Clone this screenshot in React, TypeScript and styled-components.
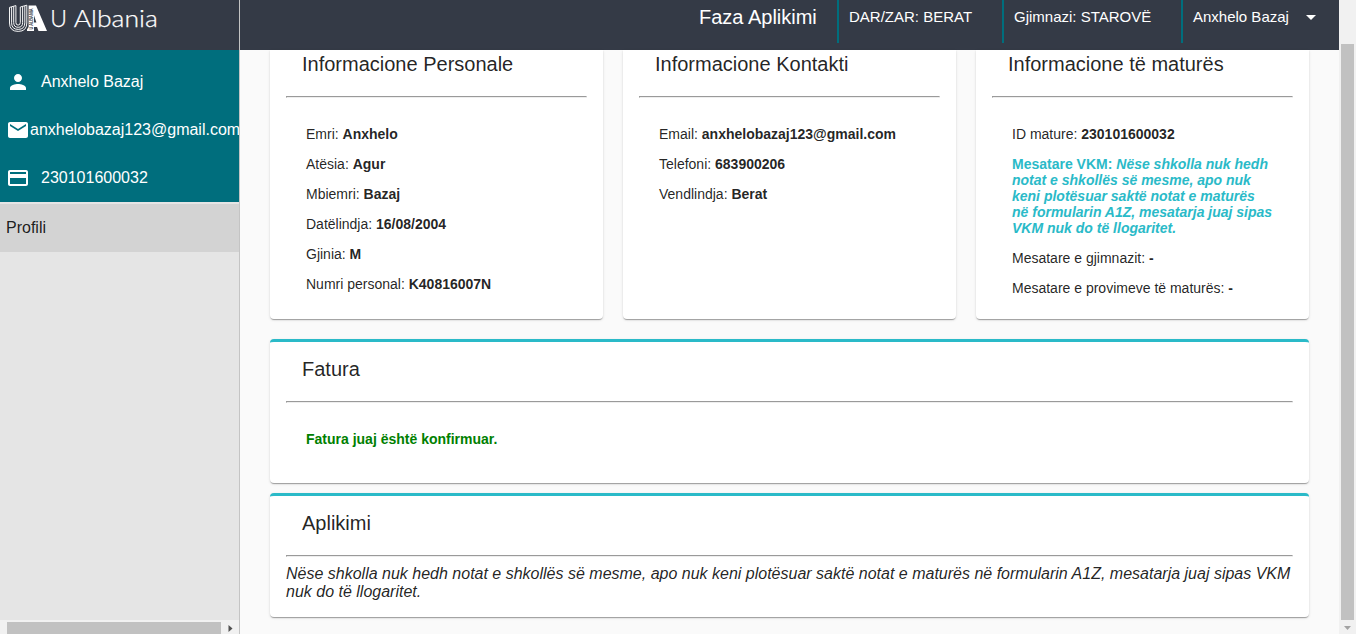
import React from "react";
import styled, { createGlobalStyle } from "styled-components";

const Global = createGlobalStyle`
  * { box-sizing: border-box; }
  body { margin: 0; overflow: hidden; background: #fafafa; }
  p, h2 { margin: 0; font-weight: 400; }
`;

const Shell = styled.div`
  display: flex;
  width: 1356px;
  height: 634px;
  overflow: hidden;
  font-family: "Liberation Sans", Arial, sans-serif;
  color: rgba(0, 0, 0, 0.87);
`;

const Sidebar = styled.aside`
  display: flex;
  flex-direction: column;
  width: 240px;
  flex: none;
  background: #e5e5e5;
  border-right: 1px solid #c4c4c4;
  overflow: hidden;
`;

const Brand = styled.div`
  height: 50px;
  flex: none;
  padding: 4px 0 0 8px;
  background: #343a46;
`;

const Account = styled.div`
  height: 152px;
  flex: none;
  padding-top: 8px;
  margin-bottom: 2px;
  background: #006e7d;
  color: #fff;
`;

const AccountRow = styled.div<{ $gap: number }>`
  display: flex;
  align-items: center;
  gap: ${(p) => p.$gap}px;
  height: 48px;
  padding-left: 6px;
  font-size: 16px;
  white-space: nowrap;

  svg { flex: none; fill: #fff; }
`;

const NavItem = styled.div`
  height: 48px;
  flex: none;
  padding: 0 6px;
  background: #d3d3d3;
  font-size: 16px;
  line-height: 47px;
`;

const HorizontalBar = styled.div`
  display: flex;
  align-items: flex-end;
  justify-content: space-between;
  height: 14px;
  margin-top: auto;
  padding: 0 6px 0 7px;
  background: #f1f1f1;
`;

const HorizontalThumb = styled.div`
  width: 214px;
  height: 12px;
  background: #c1c1c1;
`;

const Page = styled.div`
  display: flex;
  flex-direction: column;
  width: 1099px;
  flex: none;
`;

const Header = styled.header`
  display: flex;
  justify-content: flex-end;
  height: 50px;
  flex: none;
  background: #343a46;
  color: #fff;
`;

const Phase = styled.div`
  width: 138px;
  font-size: 20px;
  line-height: 34px;
`;

const HeaderCell = styled.div<{ $width: number; $pad: number }>`
  display: flex;
  align-items: center;
  width: ${(p) => p.$width}px;
  height: 43px;
  padding: 0 0 10px ${(p) => p.$pad}px;
  border-left: 2px solid #006e7d;
  font-size: 15px;
  white-space: nowrap;

  svg { margin: 2px 0 0 17px; fill: #fff; }
`;

const Content = styled.main`
  display: flex;
  flex-direction: column;
  flex: 1;
  padding: 0 30px;
  background: #fafafa;
`;

const Columns = styled.div`
  display: grid;
  grid-template-columns: repeat(3, 1fr);
  gap: 20px;
  height: 269px;
  margin-bottom: 20px;
`;

const Card = styled.section<{ $height?: number; $flush?: boolean }>`
  height: ${(p) => (p.$height ? `${p.$height}px` : "auto")};
  margin-bottom: ${(p) => (p.$flush ? 0 : 10)}px;
  padding: 0 16px;
  background: #fff;
  border-top: ${(p) => (p.$flush ? "none" : "3px solid #2abac8")};
  border-radius: ${(p) => (p.$flush ? "0 0 4px 4px" : "4px")};
  box-shadow: 0 2px 1px -1px rgba(0, 0, 0, 0.2), 0 1px 1px rgba(0, 0, 0, 0.14),
    0 1px 3px rgba(0, 0, 0, 0.12);
`;

const Title = styled.h2<{ $top: number }>`
  padding: ${(p) => p.$top}px 16px 20px;
  font-size: 20px;
  line-height: 24px;
`;

const Rule = styled.hr`
  height: 2px;
  margin: 0;
  border: 1px solid;
  border-color: #9a9a9a #eeeeee #eeeeee #9a9a9a;
`;

const Fields = styled.div`
  display: flex;
  flex-direction: column;
  gap: 14px;
  padding: 28px 20px 0;
  font-size: 14px;
  line-height: 16px;
`;

const Average = styled.p`
  color: #2abac8;
  font-weight: 700;
`;

const Confirmed = styled.p`
  color: #008000;
  font-weight: 700;
`;

const Notice = styled.p`
  padding-top: 8px;
  font-size: 16px;
  font-style: italic;
  line-height: 18px;
`;

const VerticalBar = styled.div`
  display: flex;
  flex-direction: column;
  align-items: center;
  width: 17px;
  flex: none;
  padding-top: 44px;
  background: #f1f1f1;

  svg { margin-top: 6px; }
`;

const VerticalThumb = styled.div`
  width: 13px;
  height: 576px;
  background: #c1c1c1;
`;

const Logo = () => (
  <svg width="152" height="32" viewBox="0 0 152 32">
    <g fill="none" stroke="#fff" strokeWidth="0.95">
      <path d="M1.5 3.4L7.9 1.6V18.5q0 2.6 2.2 2.6t2.2-2.6V3L18.8 1.2V19q0 8.4-8.6 8.4T1.5 19Z" />
      <path d="M3.6 3V18.8q0 6.6 6.6 6.6t6.6-6.6V2" />
      <path d="M5.7 2.4V18.6q0 4.7 4.5 4.7t4.4-4.7V2.6" />
    </g>
    <path d="M20.6 1.5H28L39 27H30.5L29 23H26V27H19V25.5L20.6 23Z" fill="#fff" />
    <path d="M26 11.5L28.4 18.5H26Z" fill="#343a46" />
    <text
      transform="translate(24.6 25.5) rotate(-90)"
      fontFamily="Liberation Sans"
      fontSize="5"
      fontWeight="700"
      fill="#343a46"
      textLength="21"
      lengthAdjust="spacingAndGlyphs"
    >
      U ALBANIA
    </text>
    <g
      fontFamily="Lato, sans-serif"
      fontSize="23"
      fontWeight="300"
      fill="#fff"
      stroke="#fff"
      strokeWidth="0.25"
    >
      <text x="42.2" y="23.2">U</text>
      <text x="65.8" y="23.2" textLength="84" lengthAdjust="spacingAndGlyphs">
        Albania
      </text>
    </g>
  </svg>
);

const MaterialIcon = ({ d }: { d: string }) => (
  <svg width="24" height="24" viewBox="0 0 24 24">
    <path d={d} />
  </svg>
);

const PERSON =
  "M12 12c2.21 0 4-1.79 4-4s-1.79-4-4-4-4 1.79-4 4 1.79 4 4 4zm0 2c-2.67 0-8 1.34-8 4v2h16v-2c0-2.66-5.33-4-8-4z";
const MAIL =
  "M20 4H4c-1.1 0-1.99.9-1.99 2L2 18c0 1.1.9 2 2 2h16c1.1 0 2-.9 2-2V6c0-1.1-.9-2-2-2zm0 4l-8 5-8-5V6l8 5 8-5v2z";
const PAYMENT =
  "M20 4H4c-1.11 0-1.99.89-1.99 2L2 18c0 1.11.89 2 2 2h16c1.11 0 2-.89 2-2V6c0-1.11-.89-2-2-2zm0 14H4v-6h16v6zm0-10H4V6h16v2z";

type Field = [string, string];

const personal: Field[] = [
  ["Emri", "Anxhelo"],
  ["Atësia", "Agur"],
  ["Mbiemri", "Bazaj"],
  ["Datëlindja", "16/08/2004"],
  ["Gjinia", "M"],
  ["Numri personal", "K40816007N"],
];

const contact: Field[] = [
  ["Email", "anxhelobazaj123@gmail.com"],
  ["Telefoni", "683900206"],
  ["Vendlindja", "Berat"],
];

const Entry = ({ field: [label, value] }: { field: Field }) => (
  <p>
    {label}: <b>{value}</b>
  </p>
);

export default function App() {
  return (
    <>
      <Global />
      <Shell>
        <Sidebar>
          <Brand>
            <Logo />
          </Brand>
          <Account>
            <AccountRow $gap={11}>
              <MaterialIcon d={PERSON} />
              Anxhelo Bazaj
            </AccountRow>
            <AccountRow $gap={0}>
              <MaterialIcon d={MAIL} />
              anxhelobazaj123@gmail.com
            </AccountRow>
            <AccountRow $gap={11}>
              <MaterialIcon d={PAYMENT} />
              230101600032
            </AccountRow>
          </Account>
          <NavItem>Profili</NavItem>
          <HorizontalBar>
            <HorizontalThumb />
            <svg width="5" height="12" viewBox="0 0 5 12">
              <path d="M0.5 3L4.5 6.5L0.5 10Z" fill="#505050" />
            </svg>
          </HorizontalBar>
        </Sidebar>
        <Page>
          <Header>
            <Phase>Faza Aplikimi</Phase>
            <HeaderCell $width={165} $pad={10}>DAR/ZAR: BERAT</HeaderCell>
            <HeaderCell $width={179} $pad={10}>Gjimnazi: STAROVË</HeaderCell>
            <HeaderCell $width={158} $pad={10}>
              Anxhelo Bazaj
              <svg width="10" height="5" viewBox="0 0 10 5">
                <path d="M0 0H10L5 5Z" />
              </svg>
            </HeaderCell>
          </Header>
          <Content>
            <Columns>
              <Card $flush>
                <Title $top={2}>Informacione Personale</Title>
                <Rule />
                <Fields>
                  {personal.map((f) => (
                    <Entry key={f[0]} field={f} />
                  ))}
                </Fields>
              </Card>
              <Card $flush>
                <Title $top={2}>Informacione Kontakti</Title>
                <Rule />
                <Fields>
                  {contact.map((f) => (
                    <Entry key={f[0]} field={f} />
                  ))}
                </Fields>
              </Card>
              <Card $flush>
                <Title $top={2}>Informacione të maturës</Title>
                <Rule />
                <Fields>
                  <Entry field={["ID mature", "230101600032"]} />
                  <Average>
                    Mesatare VKM:{" "}
                    <i>
                      Nëse shkolla nuk hedh notat e shkollës së mesme, apo nuk keni plotësuar saktë
                      notat e maturës në formularin A1Z, mesatarja juaj sipas VKM nuk do të
                      llogaritet.
                    </i>
                  </Average>
                  <Entry field={["Mesatare e gjimnazit", "-"]} />
                  <Entry field={["Mesatare e provimeve të maturës", "-"]} />
                </Fields>
              </Card>
            </Columns>
            <Card $height={144}>
              <Title $top={15}>Fatura</Title>
              <Rule />
              <Fields>
                <Confirmed>Fatura juaj është konfirmuar.</Confirmed>
              </Fields>
            </Card>
            <Card $height={124}>
              <Title $top={15}>Aplikimi</Title>
              <Rule />
              <Notice>
                Nëse shkolla nuk hedh notat e shkollës së mesme, apo nuk keni plotësuar saktë notat
                e maturës në formularin A1Z, mesatarja juaj sipas VKM nuk do të llogaritet.
              </Notice>
            </Card>
          </Content>
        </Page>
        <VerticalBar>
          <VerticalThumb />
          <svg width="7" height="4" viewBox="0 0 7 4">
            <path d="M0 0H7L3.5 4Z" fill="#a3a3a3" />
          </svg>
        </VerticalBar>
      </Shell>
    </>
  );
}
